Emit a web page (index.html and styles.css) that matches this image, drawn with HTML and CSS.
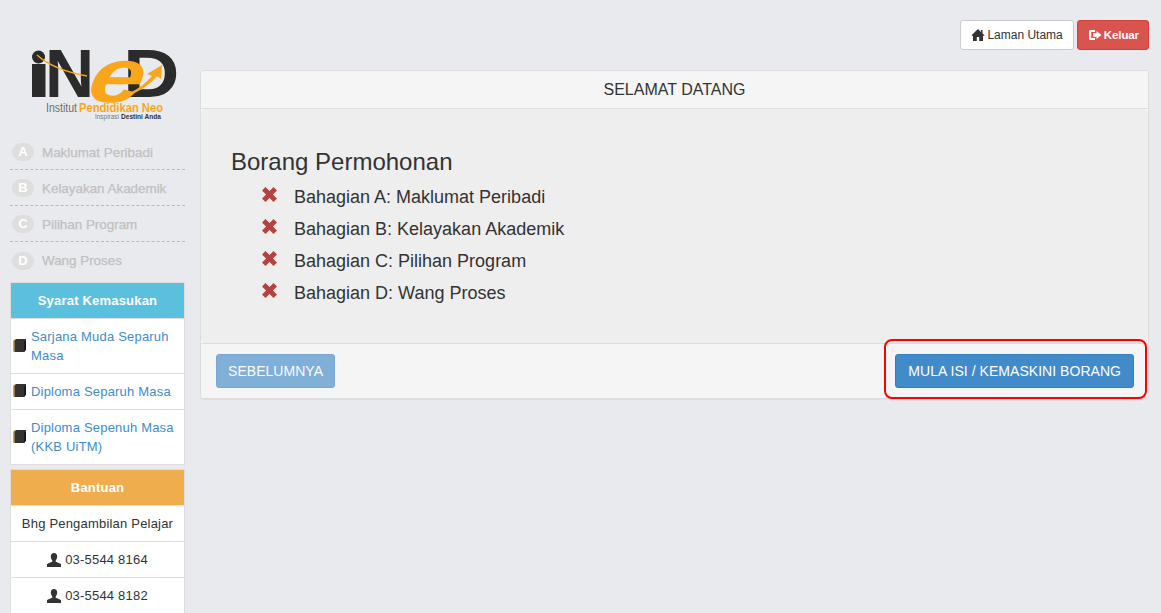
FILE: index.html
```html
<!DOCTYPE html>
<html lang="ms">
<head>
<meta charset="utf-8">
<title>Borang Permohonan</title>
<link rel="stylesheet" href="styles.css">
</head>
<body>
<svg class="defs" aria-hidden="true">
  <defs>
    <symbol id="i-book" viewBox="1 1 12 12"><path fill="#e09a3c" d="M1 2.500 3 1h1v12H3l-2-.5z"/><path fill="#333" d="M2.500 2.500 4 1h9v9.500L11.500 13h-9z"/><path fill="#111" d="M11.500 3H13v7.500L11.500 13z"/></symbol>
    <symbol id="i-user" viewBox="0 0 14 14"><path fill="#333" d="M7 0c2 0 3.200 1.500 3.200 3.500 0 1.500-.6 3-1.500 3.900v1.300c1.800.7 4.300 1.500 5.300 2.600V14H0v-2.700c1-1.100 3.500-1.900 5.300-2.600V7.400C4.400 6.500 3.800 5 3.800 3.500 3.800 1.500 5 0 7 0z"/></symbol>
    <symbol id="i-x" viewBox="1 1 14 14"><path fill="#b04442" d="M4.200 1 8 4.800 11.800 1 15 4.200 11.200 8 15 11.800 11.800 15 8 11.200 4.200 15 1 11.800 4.800 8 1 4.200z"/></symbol>
  </defs>
</svg>
<div class="page">
  <aside class="sidebar">
    <svg class="logo" viewBox="0 0 175 75" role="img" aria-label="iNeD Institut Pendidikan Neo">
      <circle cx="28.500" cy="12" r="6.500" fill="#2b2b2b"/>
      <rect x="22" y="19" width="13.500" height="33" fill="#2b2b2b"/>
      <text class="logo-big" transform="translate(35 52)" font-size="68">N</text>
      <text class="logo-big" transform="translate(113 52) scale(1.15 1)" font-size="68">D</text>
      <path d="M27 10c12 11 28 17 50 21" fill="none" stroke="#f9a61a" stroke-width="1.500"/>
      <text class="logo-e" transform="translate(75 57) scale(1.35 1.05) skewX(-10)" font-size="73">e</text>
      <path d="M90 55c22-1 40-10 52-24l-5-2 15-9-1 14-4-3C135 45 115 56 90 55z" fill="#f9a61a"/>
      <text class="logo-line" x="36" y="67" font-size="12" textLength="31" lengthAdjust="spacingAndGlyphs">Institut</text>
      <text class="logo-orange" x="69" y="67" font-size="12" textLength="84" lengthAdjust="spacingAndGlyphs">Pendidikan Neo</text>
      <text class="logo-sub" x="85" y="74" font-size="7" textLength="24" lengthAdjust="spacingAndGlyphs">Inspirasi</text>
      <text class="logo-strong" x="111" y="74" font-size="7" textLength="40" lengthAdjust="spacingAndGlyphs">Destini Anda</text>
    </svg>
    <ul class="steps">
      <li class="step"><span class="step-badge">A</span>Maklumat Peribadi</li>
      <li class="step"><span class="step-badge">B</span>Kelayakan Akademik</li>
      <li class="step"><span class="step-badge">C</span>Pilihan Program</li>
      <li class="step"><span class="step-badge">D</span>Wang Proses</li>
    </ul>
    <section class="box">
      <h3 class="box-head box-info">Syarat Kemasukan</h3>
      <a class="box-item box-link" href="#"><svg class="book"><use href="#i-book"/></svg><span>Sarjana Muda Separuh Masa</span></a>
      <a class="box-item box-link" href="#"><svg class="book"><use href="#i-book"/></svg><span>Diploma Separuh Masa</span></a>
      <a class="box-item box-link" href="#"><svg class="book"><use href="#i-book"/></svg><span>Diploma Sepenuh Masa (KKB UiTM)</span></a>
    </section>
    <section class="box box-help">
      <h3 class="box-head box-warning">Bantuan</h3>
      <div class="box-item box-center">Bhg Pengambilan Pelajar</div>
      <div class="box-item box-center"><svg class="user"><use href="#i-user"/></svg>03-5544 8164</div>
      <div class="box-item box-center"><svg class="user"><use href="#i-user"/></svg>03-5544 8182</div>
    </section>
  </aside>
  <main class="main">
    <div class="topbar">
      <a class="btn btn-default" href="#">
        <svg class="btn-icon" viewBox="0 0 14 14"><path fill="#333" d="M7 1 .5 7.300l.8.800L2 7.500V13h3.800V9h2.400v4H12V7.500l.7.600.8-.8L11.500 5.400V2H10v2z"/></svg>Laman Utama</a>
      <a class="btn btn-danger" href="#">
        <svg class="btn-icon" viewBox="0 0 14 14"><path fill="#fff" d="M1 3.500C1 2.500 1.800 2 2.500 2H7v2H3.200v6H7v2H2.500C1.800 12 1 11.500 1 10.500z"/><path fill="#fff" d="M8.500 3 13.500 7l-5 4V8.700H5V5.300h3.500z"/></svg>Keluar</a>
    </div>
    <section class="panel">
      <header class="panel-head">SELAMAT DATANG</header>
      <div class="panel-body">
        <h2 class="form-title">Borang Permohonan</h2>
        <ul class="parts">
          <li class="part"><svg class="part-x"><use href="#i-x"/></svg>Bahagian A: Maklumat Peribadi</li>
          <li class="part"><svg class="part-x"><use href="#i-x"/></svg>Bahagian B: Kelayakan Akademik</li>
          <li class="part"><svg class="part-x"><use href="#i-x"/></svg>Bahagian C: Pilihan Program</li>
          <li class="part"><svg class="part-x"><use href="#i-x"/></svg>Bahagian D: Wang Proses</li>
        </ul>
      </div>
      <footer class="panel-foot">
        <a class="btn-action btn-muted" href="#">SEBELUMNYA</a>
        <span class="highlight"><a class="btn-action" href="#">MULA ISI / KEMASKINI BORANG</a></span>
      </footer>
    </section>
  </main>
</div>
</body>
</html>
```
FILE: styles.css
```css
* { box-sizing: border-box; }
html, body { height: 100%; }
body {
  margin: 0;
  background: #e9eaee;
  color: #333;
  font-family: "Liberation Sans", Arial, sans-serif;
  font-size: 14px;
  overflow: hidden;
}
a { text-decoration: none; }
.defs { display: none; }
.page { display: flex; align-items: flex-start; padding-left: 10px; }

/* Sidebar */
.sidebar { width: 175px; flex: none; padding-top: 45px; }
.logo { display: block; width: 175px; height: 75px; margin-bottom: 14px; overflow: visible; }
.logo-big { font-family: "Liberation Sans", sans-serif; font-weight: 700; fill: #2b2b2b; }
.logo-e { font-family: "Liberation Sans", sans-serif; font-weight: 700; font-style: italic; fill: #f9a61a; }
.logo-line { font-family: "Liberation Sans", sans-serif; fill: #6d6d6d; }
.logo-orange { font-family: "Liberation Sans", sans-serif; fill: #f9a61a; font-weight: 700; }
.logo-sub { font-family: "Liberation Sans", sans-serif; fill: #777; }
.logo-strong { font-family: "Liberation Sans", sans-serif; fill: #333; font-weight: 700; }

.steps { list-style: none; margin: 0 0 4px; padding: 0; }
.step {
  display: flex;
  align-items: center;
  height: 36px;
  padding: 1px 0 0 2px;
  color: #c0c0c0;
  font-size: 13.400px;
  -webkit-text-stroke: .25px #c0c0c0;
  border-bottom: 1px dashed #b9b9b9;
}
.step:last-child { border-bottom: 0; }
.step-badge {
  width: 22px;
  height: 18px;
  margin-right: 8px;
  border-radius: 9px;
  background: #dedede;
  color: #fff;
  -webkit-text-stroke: 0;
  font-weight: 700;
  text-align: center;
  font-size: 13px;
  line-height: 18px;
}

.box { width: 175px; border: 1px solid #ddd; border-bottom: 0; background: #fff; }
.box-help { margin-top: 4px; }
.box-head {
  margin: 0;
  height: 36px;
  color: #fff;
  font-size: 13px;
  letter-spacing: .2px;
  font-weight: 700;
  line-height: 35px;
  text-align: center;
  border-bottom: 1px solid #ddd;
}
.box-info { background: #5bc0de; }
.box-warning { background: #f0ad4e; }
.box-item {
  display: flex;
  align-items: center;
  padding: 8px 6px;
  min-height: 36px;
  font-size: 13px;
  line-height: 19px;
  letter-spacing: .2px;
  border-bottom: 1px solid #ddd;
}
.box-link { color: #428bca; padding-left: 2px; }
.box-center { justify-content: center; color: #333; }
.book { flex: none; width: 13px; height: 13px; margin: 0 5px 2px 0; }
.user { flex: none; width: 14px; height: 14px; margin-right: 4px; }

/* Main */
.main { width: 949px; flex: none; margin-left: 15px; }
.topbar { display: flex; justify-content: flex-end; gap: 3px; padding-top: 20px; margin-bottom: 20px; }
.btn {
  display: flex;
  align-items: center;
  height: 30px;
  padding: 0 10px;
  border: 1px solid #ccc;
  border-radius: 3px;
  font-size: 12px;
}
.btn-default { background: #fff; color: #333; }
.btn-danger {
  padding-right: 9px;
  background: #d9534f;
  border-color: #d43f3a;
  color: #fff;
  font-size: 11.500px;
  font-weight: 700;
  letter-spacing: -.1px;
}
.btn-icon { width: 14px; height: 14px; margin-right: 2px; }

.panel {
  background: #fff;
  border: 1px solid #ddd;
  border-radius: 4px;
  box-shadow: 0 1px 1px rgba(0, 0, 0, .05);
}
.panel-head {
  height: 38px;
  background: #f5f5f5;
  border-bottom: 1px solid #ddd;
  border-radius: 3px 3px 0 0;
  text-align: center;
  font-size: 16px;
  line-height: 37px;
}
.panel-body { height: 234px; padding: 39px 30px 0; background: #eee; border-radius: 4px; }
.form-title { margin: 0 0 5px; font-size: 24px; font-weight: 400; line-height: 28px; }
.parts { list-style: none; margin: 0; padding: 0 0 0 30px; }
.part { display: flex; align-items: center; height: 32px; font-size: 18px; }
.part-x { width: 15px; height: 15px; margin: -5px 17px 0 1px; }
.panel-foot {
  display: flex;
  justify-content: space-between;
  align-items: center;
  height: 55px;
  padding: 0 14px 0 15px;
  background: #f5f5f5;
  border-top: 1px solid #ddd;
  border-radius: 0 0 3px 3px;
}
.btn-action {
  display: inline-block;
  height: 34px;
  padding: 0 12px;
  background: #428bca;
  border: 1px solid #357ebd;
  border-radius: 3px;
  color: #fff;
  font-size: 14px;
  letter-spacing: .04px;
  line-height: 32px;
}
.btn-muted { padding: 0 11px; opacity: .65; }
.highlight { position: relative; display: block; }
.highlight::after {
  content: "";
  position: absolute;
  inset: -15px -13px -11px -11px;
  border: 2px solid #f00;
  border-radius: 8px;
}
```
